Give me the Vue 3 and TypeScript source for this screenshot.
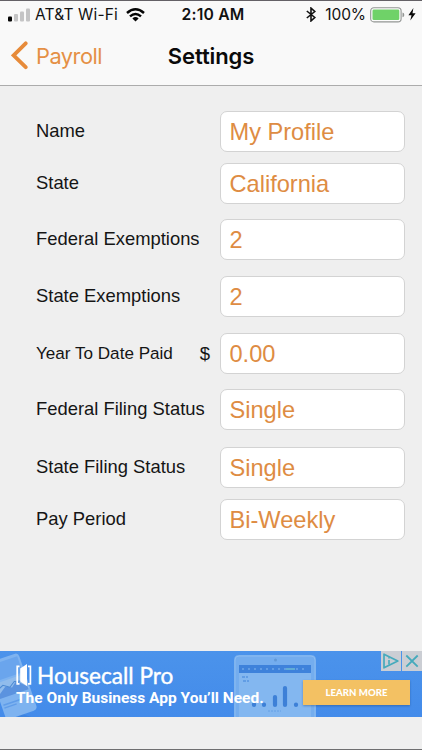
<script setup lang="ts">
interface SettingRow {
  label: string
  value: string
  gap: number
  compact?: boolean
  prefix?: string
}

const rows: SettingRow[] = [
  { label: 'Name', value: 'My Profile', gap: 0 },
  { label: 'State', value: 'California', gap: 11 },
  { label: 'Federal Exemptions', value: '2', gap: 15 },
  { label: 'State Exemptions', value: '2', gap: 16 },
  { label: 'Year To Date Paid', value: '0.00', gap: 16, compact: true, prefix: '$' },
  { label: 'Federal Filing Status', value: 'Single', gap: 15 },
  { label: 'State Filing Status', value: 'Single', gap: 17 },
  { label: 'Pay Period', value: 'Bi-Weekly', gap: 11 },
]
</script>

<template>
  <div class="screen">
    <header class="header">
      <div class="status">
        <div class="status-side">
          <svg class="signal" width="23" height="14" viewBox="0 0 23 14">
            <rect x="0" y="8.5" width="4" height="5" rx="1" fill="#050505" />
            <rect x="6" y="6" width="4" height="7.5" rx="1" fill="#c4c4c5" />
            <rect x="12" y="3.5" width="4" height="10" rx="1" fill="#c4c4c5" />
            <rect x="18" y="0.5" width="4" height="13" rx="1" fill="#c4c4c5" />
          </svg>
          <span class="carrier">AT&amp;T Wi-Fi</span>
          <svg class="wifi" width="19" height="14" viewBox="0 0 19 14">
            <g fill="none" stroke="#050505" stroke-width="2.5">
              <path d="M1 5Q9.5-2.4 18 5" />
              <path d="M4 8.4Q9.5 3.7 15 8.4" />
            </g>
            <path d="M6.4 10.4Q9.5 7.8 12.6 10.4L9.5 13.5Z" fill="#050505" />
          </svg>
        </div>
        <span class="clock">2:10 AM</span>
        <div class="status-side right">
          <svg class="bluetooth" width="10" height="15" viewBox="0 0 10 15">
            <path d="M.8 4L8.8 10.5L5 13.9V1.1L8.8 4.5L.8 11" fill="none" stroke="#111" stroke-width="1.6" />
          </svg>
          <span class="percent">100%</span>
          <svg class="battery" width="36" height="16" viewBox="0 0 36 16">
            <rect x=".7" y=".8" width="30.4" height="14.1" rx="3.2" fill="#fcfcfc" stroke="#929593" stroke-width="1.1" />
            <rect x="2.5" y="2.6" width="26.8" height="10.5" rx="1.3" fill="#6fd268" />
            <path d="M32.5 5.5Q34.3 6 34.3 7.9T32.5 10.3Z" fill="#929593" />
          </svg>
          <svg class="bolt" width="8" height="13" viewBox="0 0 8 13">
            <path d="M5.4 0L.4 7.2H3.5L2.3 12.5L7.6 5.2H4.5Z" fill="#080808" />
          </svg>
        </div>
      </div>
      <nav class="nav">
        <div class="back">
          <svg width="18" height="29" viewBox="0 0 18 29">
            <path d="M14.7 2.3L2.6 14.4L14.7 26.2" fill="none" stroke="#e78b3a" stroke-width="3.8" stroke-linecap="round" stroke-linejoin="miter" />
          </svg>
          <span>Payroll</span>
        </div>
        <h1>Settings</h1>
      </nav>
    </header>

    <main class="form">
      <div v-for="row in rows" :key="row.label" class="row" :style="{ marginTop: row.gap + 'px' }">
        <div class="label" :class="{ compact: row.compact }">
          <span>{{ row.label }}</span>
          <span v-if="row.prefix" class="prefix">{{ row.prefix }}</span>
        </div>
        <div class="field">{{ row.value }}</div>
      </div>
    </main>

    <aside class="ad">
      <svg class="art" width="422" height="66" viewBox="0 0 422 66">
        <defs>
          <linearGradient id="banner" x1="0" y1="0" x2="0" y2="1">
            <stop offset="0" stop-color="#4b93eb" />
            <stop offset="1" stop-color="#438bea" />
          </linearGradient>
        </defs>
        <rect width="422" height="66" fill="url(#banner)" />
        <path d="M10 59L31 66H20L7 61Z" fill="#367bd6" opacity=".5" />
        <g transform="rotate(-19 13 33)">
          <rect x="-5" y="5" width="33" height="60" rx="4" fill="#7eb3f0" />
          <rect x="-5" y="8" width="31" height="17" fill="#6aa5ed" />
          <rect x="-5" y="27" width="32" height="15" fill="#91bcec" />
          <path d="M-5 40L5 33L11 36L17 31L26 40V43H-5Z" fill="#5b93df" />
          <path d="M-3 50H15M-3 53H10" stroke="#609de9" stroke-width="1.5" />
          <path d="M-4 34L3 31L9 35L15 31L22 33" fill="none" stroke="#4c89d2" stroke-width="1" />
        </g>
        <path d="M234 66V9Q234 4 239 4H311Q316 4 316 9V66Z" fill="#74adee" />
        <path d="M235 66V9Q235 5 239 5H311Q315 5 315 9V66" fill="none" stroke="#8bbcf1" />
        <circle cx="275.5" cy="9" r="1.5" fill="#6098d6" />
        <path d="M239 66V14H311V66Z" fill="#83b7f0" />
        <rect x="239" y="14" width="72" height="8" fill="#3e82db" />
        <path d="M242 18H306" stroke="#6da6e9" stroke-width="1.4" stroke-dasharray="2 4" />
        <path d="M286 18H295" stroke="#62add5" stroke-width="2" />
        <path d="M242 26H248M243 30H249" stroke="#619de5" stroke-width="2" stroke-dasharray="3 1" />
        <g stroke="#3d80d7" stroke-width="4.2" stroke-linecap="round">
          <path d="M254 54V53M264 54V53.5M275 54V46M285 54V37M296 54V53.5" />
        </g>
        <path d="M268 60H281" stroke="#65a0e6" stroke-dasharray="2 1" />
      </svg>
      <div class="ad-copy">
        <div class="brand">
          <svg width="16" height="24" viewBox="0 0 16 24">
            <path d="M3.5 3.3H1.2V20.8H3.5M12 3.3H14.4V20.8H12" fill="none" stroke="#fff" stroke-width="1.7" />
            <path d="M4.2 5.5L11 1V23L4.2 18.5Z" fill="#fff" />
          </svg>
          <span>Housecall Pro</span>
        </div>
        <div class="tagline">The Only Business App You’ll Need.</div>
      </div>
      <div class="cta">LEARN MORE</div>
      <div class="ad-controls">
        <svg width="20" height="20" viewBox="0 0 20 20">
          <rect width="20" height="20" fill="#cbced4" />
          <path d="M3 3.2L16.8 10L3 16.8Z" fill="none" stroke="#45aabc" stroke-width="1.7" stroke-linejoin="round" />
          <path d="M8 6.3V7.5M8 8.9V13.6" stroke="#45aabc" stroke-width="1.6" />
        </svg>
        <svg width="20" height="20" viewBox="0 0 20 20">
          <rect width="20" height="20" fill="#cbced4" />
          <path d="M4.3 4.5L15.7 15.6M15.7 4.5L4.3 15.6" stroke="#45aabc" stroke-width="1.8" />
        </svg>
      </div>
    </aside>
  </div>
</template>

<style>
body { margin: 0; }
</style>

<style scoped>
.screen {
  box-sizing: border-box;
  width: 422px;
  height: 750px;
  display: flex;
  flex-direction: column;
  background: #efefef;
  border-top: 1px solid #646166;
  border-bottom: 1px solid #6e6e70;
  font-family: "Liberation Sans", Arial, sans-serif;
  overflow: hidden;
}
.header {
  box-sizing: border-box;
  height: 85px;
  flex: none;
  background: #f9f9f9;
  border-bottom: 1px solid #acacac;
  font-family: Inter, "Liberation Sans", sans-serif;
}
.status {
  height: 27px;
  display: grid;
  grid-template-columns: 1fr auto 1fr;
  align-items: center;
  padding: 0 6px 0 8px;
  color: #111;
}
.status-side { display: flex; align-items: center; }
.right { justify-content: flex-end; }
.carrier { margin-left: 4px; font-size: 15.5px; letter-spacing: .15px; white-space: nowrap; }
.wifi { margin-left: 8px; }
.clock { padding-left: 2px; font-size: 15.7px; font-weight: 600; letter-spacing: .2px; }
.percent { margin: 0 4px 0 9px; font-size: 15.5px; letter-spacing: -.1px; }
.bolt { margin-left: 2px; }
.nav {
  height: 55px;
  display: grid;
  grid-template-columns: 1fr auto 1fr;
  align-items: center;
}
.back {
  display: flex;
  align-items: center;
  gap: 7px;
  padding-left: 11px;
  color: #e59045;
  font-size: 21.8px;
  letter-spacing: -.5px;
}
h1 { margin: 0; color: #0a0a0a; font-size: 22px; font-weight: 600; letter-spacing: -.12px; }
.form {
  flex: 1;
  padding: 25px 17px 0 36px;
}
.row {
  display: grid;
  grid-template-columns: 184px 185px;
}
.label {
  height: 40px;
  display: flex;
  align-items: center;
  justify-content: space-between;
  color: #151515;
  font-size: 18.4px;
  white-space: nowrap;
}
.compact { height: 41px; font-size: 17.1px; }
.prefix { margin-right: 10px; font-size: 18.5px; }
.field {
  box-sizing: border-box;
  height: 41px;
  display: flex;
  align-items: center;
  padding: 1px 0 0 8.5px;
  border: 1px solid #d3d3d3;
  border-radius: 7px;
  background: #fff;
  color: #de8c43;
  font-size: 23.6px;
}
.ad {
  position: relative;
  height: 66px;
  flex: none;
  margin-bottom: 32px;
  display: flex;
  color: #fff;
}
.art { position: absolute; inset: 0; }
.ad-copy { position: relative; width: 303px; padding: 11px 0 0 16px; box-sizing: border-box; }
.brand {
  height: 26px;
  display: flex;
  align-items: center;
  gap: 5px;
  font-family: Lato, sans-serif;
  font-size: 22.6px;
  letter-spacing: 0;
  font-weight: 400;
  white-space: nowrap;
  -webkit-text-stroke: .4px #fff;
}
.tagline {
  font-family: Roboto, sans-serif;
  font-size: 15.5px;
  line-height: 20px;
  font-weight: 700;
  letter-spacing: 0;
  white-space: nowrap;
}
.cta {
  position: relative;
  width: 107px;
  height: 25px;
  margin-top: 29px;
  background: #f3c163;
  box-shadow: 0 1px 2px rgba(23, 61, 112, .4);
  font: 900 9.6px/25px Lato, sans-serif;
  text-align: center;
}
.ad-controls { position: absolute; right: 0; top: 0; display: flex; gap: 1px; }
</style>
